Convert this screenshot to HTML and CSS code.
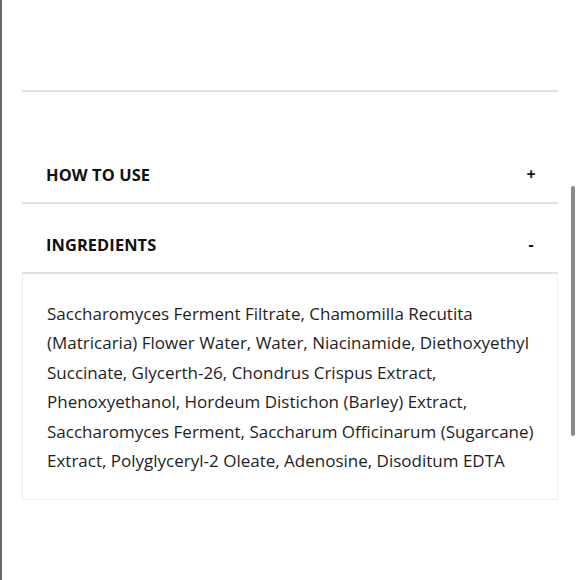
FILE: index.html
```html
<!DOCTYPE html>
<html>
<head>
<meta charset="utf-8">
<link rel="stylesheet" href="styles.css">
</head>
<body>
<div class="frame">
  <div class="page">
    <div class="accordion">
      <div class="acc-item">
        <div class="acc-head"><span class="acc-title">HOW TO USE</span><span class="acc-sign">+</span></div>
      </div>
      <div class="acc-item open">
        <div class="acc-head"><span class="acc-title">INGREDIENTS</span><span class="acc-sign">-</span></div>
        <div class="acc-body">
          <p>Saccharomyces Ferment Filtrate, Chamomilla Recutita (Matricaria) Flower Water, Water, Niacinamide, Diethoxyethyl Succinate, Glycerth-26, Chondrus Crispus Extract, Phenoxyethanol, Hordeum Distichon (Barley) Extract, Saccharomyces Ferment, Saccharum Officinarum (Sugarcane) Extract, Polyglyceryl-2 Oleate, Adenosine, Disoditum EDTA</p>
        </div>
      </div>
    </div>
  </div>
  <div class="scrollbar"></div>
</div>
</body>
</html>
```

FILE: styles.css
```css
html, body {
  margin: 0;
  padding: 0;
  background: #fff;
}
body {
  font-family: "Open Sans", "Noto Sans", sans-serif;
  color: #111;
}
.frame {
  position: relative;
  width: 580px;
  height: 580px;
  border-left: 2px solid #6b6b6b;
  box-sizing: border-box;
  overflow: hidden;
}
.page {
  padding-top: 90px;
  padding-left: 20px;
  width: 536px;
}
.accordion {
  border-top: 2px solid #e2e2e2;
  padding-top: 42px;
}
.acc-head {
  display: flex;
  justify-content: space-between;
  align-items: center;
  height: 70px;
  padding: 12px 22px 0 24px;
  box-sizing: border-box;
  border-bottom: 2px solid #e2e2e2;
}
.acc-title {
  font-weight: 700;
  font-size: 16.4px;
  letter-spacing: 0.1px;
  color: #111;
}
.acc-sign {
  font-weight: 700;
  font-size: 16px;
  width: 10px;
  text-align: center;
}
.acc-body {
  border: 1px solid #efefef;
  border-top: none;
  padding: 25px 20px 24px 24px;
}
.acc-body p {
  margin: 0;
  font-size: 17px;
  line-height: 29.4px;
  color: #1e1e1e;
}
.scrollbar {
  position: absolute;
  left: 569px;
  top: 186px;
  width: 4px;
  height: 250px;
  border-radius: 2px;
  background: #8a8a8a;
}
```
